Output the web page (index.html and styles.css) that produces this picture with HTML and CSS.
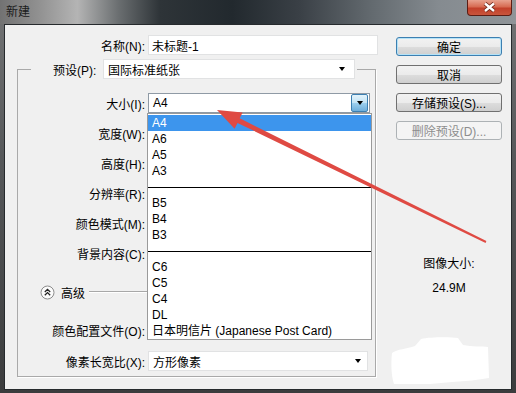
FILE: index.html
```html
<!DOCTYPE html>
<html lang="zh-CN">
<head>
    <meta charset="UTF-8">
    <title>新建</title>
    <link rel="stylesheet" href="styles.css">
</head>
<body>
<div class="window">
    <!-- 标题栏 -->
    <div class="titlebar">
        <span class="title">新建</span>
        <span class="close">
            <svg width="43" height="15" viewBox="0 0 43 15">
                <path d="M17 3.5 L26 11 M26 3.5 L17 11" stroke="#6b2418" stroke-width="4.2"/>
                <path d="M17 3.5 L26 11 M26 3.5 L17 11" stroke="#fff" stroke-width="2.4"/>
            </svg>
        </span>
    </div>

    <div class="frame">
        <div class="client">
            <!-- 左侧表单 -->
            <div class="form">
                <div class="row name-row">
                    <label class="lbl">名称(N):</label>
                    <div class="field name-input">未标题-1</div>
                </div>

                <fieldset class="group">
                    <legend class="preset">
                        <span class="preset-lbl">预设(P):</span>
                        <div class="field preset-select">国际标准纸张<i class="tri"></i></div>
                    </legend>

                    <div class="row size-row">
                        <label class="lbl">大小(I):</label>
                        <div class="field size-field">
                            A4
                            <span class="drop-btn"><i class="tri"></i></span>
                            <!-- 展开的下拉列表 -->
                            <ul class="droplist">
                                <li class="now">A4</li>
                                <li>A6</li>
                                <li>A5</li>
                                <li>A3</li>
                                <li class="sep"></li>
                                <li>B5</li>
                                <li>B4</li>
                                <li>B3</li>
                                <li class="sep"></li>
                                <li>C6</li>
                                <li>C5</li>
                                <li>C4</li>
                                <li>DL</li>
                                <li>日本明信片 (Japanese Post Card)</li>
                            </ul>
                        </div>
                    </div>
                    <div class="row"><label class="lbl">宽度(W):</label></div>
                    <div class="row"><label class="lbl">高度(H):</label></div>
                    <div class="row"><label class="lbl">分辨率(R):</label></div>
                    <div class="row"><label class="lbl">颜色模式(M):</label></div>
                    <div class="row"><label class="lbl">背景内容(C):</label></div>

                    <div class="row adv-row">
                        <svg class="adv-icon" width="15" height="15" viewBox="0 0 15 15">
                            <circle cx="7.5" cy="7.5" r="6.5" fill="#fbfbfb" stroke="#8c8c8c"/>
                            <path d="M4.8 7 L7.5 4.4 L10.2 7 M4.8 10.2 L7.5 7.6 L10.2 10.2" fill="none" stroke="#222" stroke-width="1.3"/>
                        </svg>
                        <span class="adv-text">高级</span>
                        <span class="groove"></span>
                    </div>
                    <div class="row profile-row"><label class="lbl">颜色配置文件(O):</label></div>
                    <div class="row aspect-row">
                        <label class="lbl">像素长宽比(X):</label>
                        <div class="field aspect-select">方形像素<i class="tri"></i></div>
                    </div>
                </fieldset>
            </div>

            <!-- 右侧按钮 -->
            <div class="side">
                <div class="btn default">确定</div>
                <div class="btn">取消</div>
                <div class="btn">存储预设(S)...</div>
                <div class="btn disabled">删除预设(D)...</div>
                <div class="info">
                    <p>图像大小:</p>
                    <p class="info-num">24.9M</p>
                </div>
            </div>
        </div>
    </div>

    <!-- 红色箭头 + 涂白 -->
    <svg class="marks" width="516" height="393" viewBox="0 0 516 393">
        <polygon fill="#df4a43" points="217,110 242.6,112.5 239.7,118.3 486.4,241.1 485.6,242.9 237.5,122.9 234.6,128.7"/>
        <path fill="#fff" d="M392 353 C397 349 407 349 415 346 L421 339 C430 337 450 337 458 338 L463 345 C472 347 482 346 488 347 L489 378 C478 380 466 381 452 382 L430 384 L394 384 C391 375 391 362 392 353 Z"/>
    </svg>
</div>
</body>
</html>
```

FILE: styles.css
```css
*{
    margin: 0;
    padding: 0;
    box-sizing: border-box;
}
body{
    width: 516px;
    height: 393px;
    overflow: hidden;
    background: #3a3a3a;
    font-family: "Liberation Sans", "Noto Sans CJK SC", sans-serif;
    font-size: 12px;
    color: #000;
}
ul{
    list-style: none;
}

/*窗口外框*/
.window{
    position: relative;
    width: 516px;
    height: 393px;
    display: flex;
    flex-direction: column;
    background: linear-gradient(180deg, #747576 0%, #56585a 40%, #3b3c3d 100%);
}
.titlebar{
    height: 24px;
    display: flex;
    align-items: flex-start;
    justify-content: space-between;
    background: linear-gradient(90deg, #727272 0%, #939393 8%, #b4b4b4 15%, #6a6e70 23%, #2e3438 31%, #22292e 45%, #3a4046 58%, #636a6f 72%, #858b90 85%, #8f9498 100%);
}
.title{
    margin: 5px 0 0 6px;
    line-height: 14px;
    color: #1c1c1c;
}
.close{
    width: 45px;
    height: 16px;
    margin-right: 4px;
    border: 1px solid #5c1d14;
    border-top: 0;
    border-radius: 0 0 4px 4px;
    background: linear-gradient(180deg, #e8a28f 0%, #d76b52 45%, #c2402a 55%, #c9553c 100%);
    display: flex;
}
.frame{
    flex: 1;
    display: flex;
    padding: 0 4px 3px 4px;
}
.client{
    flex: 1;
    display: flex;
    border: 1px solid #262a2d;
    background: #f0f0f0;
}

/*左侧表单*/
.form{
    width: 376px;
    padding-top: 10px;
}
.row{
    display: flex;
    align-items: center;
    height: 20px;
}
.lbl{
    flex: none;
    text-align: right;
    white-space: nowrap;
    margin-right: 3px;
}
.name-row .lbl{
    width: 140px;
}
.field{
    height: 20px;
    display: flex;
    align-items: center;
    padding-left: 4px;
    background: #fff;
    border: 1px solid #e1e2e3;
    white-space: nowrap;
}
.name-input{
    width: 230px;
    padding-left: 3px;
}
.tri{
    width: 0;
    height: 0;
    border-left: 3.5px solid transparent;
    border-right: 3.5px solid transparent;
    border-top: 4px solid #000;
}

/*分组框*/
.group{
    width: 359px;
    margin: 4px 0 0 12px;
    padding: 0 0 5px 0;
    min-width: 0;
    border: 1px solid #a9a9a9;
    box-shadow: 1px 1px 0 #fff;
}
.preset{
    display: flex;
    align-items: center;
    margin-left: 13px;
    padding: 0 2px 0 22px;
}
.preset-lbl{
    width: 50px;
}
.preset-select{
    width: 252px;
    justify-content: space-between;
    padding-right: 9px;
}
.group .lbl{
    width: 127px;
}
.group .row + .row{
    margin-top: 10px;
}
.group .size-row{
    margin-top: 14px;
}
.size-field{
    position: relative;
    width: 222px;
    padding-right: 1px;
    justify-content: space-between;
    border-color: #8f9aa5;
}
.drop-btn{
    width: 17px;
    height: 18px;
    display: flex;
    align-items: center;
    justify-content: center;
    border: 1px solid #3c7fb1;
    border-radius: 2px;
    background: linear-gradient(180deg, #e3f3fb 0%, #c2e3f5 50%, #9ccfee 51%, #6eaedb 100%);
}

/*下拉列表*/
.droplist{
    position: absolute;
    top: 19px;
    left: -2px;
    width: 225px;
    padding-top: 1px;
    background: #fff;
    border: 1px solid #9a9a9a;
    z-index: 2;
}
.droplist li{
    height: 16px;
    line-height: 16px;
    padding-left: 4px;
}
.droplist li.now{
    background: #3d95ed;
    color: #fff;
}
.droplist li.sep{
    display: flex;
    align-items: center;
    padding-left: 0;
}
.droplist li.sep::before{
    content: "";
    flex: 1;
    height: 1px;
    background: #000;
}

/*高级*/
.group .row.adv-row{
    margin-top: 19px;
    padding-left: 22px;
}
.adv-text{
    margin-left: 6px;
}
.groove{
    flex: 1;
    height: 2px;
    margin: 0 10px 0 4px;
    border-top: 1px solid #a8a8a8;
    border-bottom: 1px solid #fff;
}
.group .row.profile-row{
    margin-top: 18px;
}
.group .row.aspect-row{
    margin-top: 11px;
}
.aspect-select{
    width: 220px;
    justify-content: space-between;
    padding-right: 6px;
}

/*右侧按钮*/
.side{
    width: 106px;
    margin-left: 15px;
    padding-top: 12px;
    display: flex;
    flex-direction: column;
}
.btn{
    height: 19px;
    margin-bottom: 9px;
    display: flex;
    align-items: center;
    justify-content: center;
    border: 1px solid #707070;
    border-radius: 3px;
    background: linear-gradient(180deg, #f2f2f2 0%, #ebebeb 50%, #dddddd 51%, #cfcfcf 100%);
}
.btn.default{
    border-color: #3c7fb1;
    box-shadow: inset 0 0 0 1px #b4e2f7;
}
.btn.disabled{
    border-color: #adb2b5;
    background: #f4f4f4;
    color: #8d8d8d;
}
.info{
    margin-top: 107px;
    text-align: center;
    line-height: 16px;
}
.info-num{
    margin-top: 8px;
}

/*标注层*/
.marks{
    position: absolute;
    left: 0;
    top: 0;
    z-index: 5;
    pointer-events: none;
}
```
